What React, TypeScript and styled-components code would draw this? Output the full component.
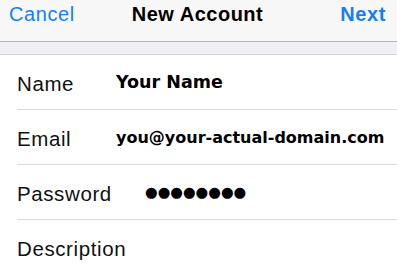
import React from "react";
import styled, { createGlobalStyle } from "styled-components";

const Global = createGlobalStyle`
  html, body { margin: 0; padding: 0; background: #ffffff; }
  body { width: 397px; height: 266px; overflow: hidden; }
`;

const Screen = styled.div`
  width: 397px;
  height: 266px;
  overflow: hidden;
  background: #ffffff;
  font-family: "Liberation Sans", Arial, sans-serif;
`;

const NavBar = styled.div`
  box-sizing: border-box;
  height: 42px;
  padding: 0 11px 12px 9px;
  display: grid;
  grid-template-columns: 1fr auto 1fr;
  align-items: center;
  background: #f7f7f7;
  border-bottom: 1px solid #b4b4b6;
`;

const NavButton = styled.span<{ $bold?: boolean; $end?: boolean }>`
  font-size: 20px;
  letter-spacing: 0.6px;
  color: #157efb;
  font-weight: ${(p) => (p.$bold ? 700 : 400)};
  justify-self: ${(p) => (p.$end ? "end" : "start")};
`;

const NavTitle = styled.span`
  font-size: 20px;
  letter-spacing: 0.5px;
  font-weight: 700;
  color: #000;
`;

const Band = styled.div`
  height: 12px;
  background: #efeff4;
  border-bottom: 1px solid #d3d3d8;
`;

const List = styled.div`
  display: flex;
  flex-direction: column;
  padding-left: 17px;
`;

const Row = styled.div<{ $last?: boolean }>`
  box-sizing: border-box;
  height: 55px;
  display: flex;
  align-items: center;
  border-bottom: ${(p) => (p.$last ? "none" : "1px solid #dcdcdf")};
`;

const Label = styled.span`
  flex: 0 0 99px;
  font-size: 20.5px;
  letter-spacing: 0.6px;
  color: #111;
  padding-top: 3px;
`;

const Value = styled.span<{ $size?: number }>`
  font-family: "DejaVu Sans", Verdana, sans-serif;
  font-weight: 700;
  font-size: ${(p) => p.$size ?? 17}px;
  color: #000;
  white-space: nowrap;
`;

const Dots = styled.span<{ $indent?: number }>`
  margin-left: ${(p) => p.$indent ?? 0}px;
  font-family: "DejaVu Sans", sans-serif;
  font-size: 14.5px;
  color: #000;
  white-space: nowrap;
`;

export default function App() {
  return (
    <>
      <Global />
      <Screen>
        <NavBar>
          <NavButton>Cancel</NavButton>
          <NavTitle>New Account</NavTitle>
          <NavButton $bold $end>
            Next
          </NavButton>
        </NavBar>
        <Band />
        <List>
          <Row>
            <Label>Name</Label>
            <Value $size={17.5}>Your Name</Value>
          </Row>
          <Row>
            <Label>Email</Label>
            <Value $size={16}>you@your-actual-domain.com</Value>
          </Row>
          <Row>
            <Label>Password</Label>
            <Dots $indent={29}>●●●●●●●●</Dots>
          </Row>
          <Row $last>
            <Label>Description</Label>
          </Row>
        </List>
      </Screen>
    </>
  );
}
